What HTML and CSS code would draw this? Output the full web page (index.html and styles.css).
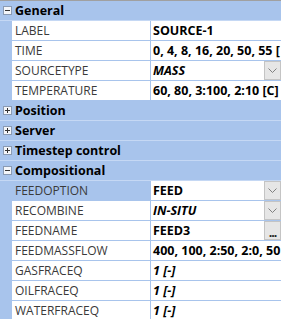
FILE: index.html
```html
<!DOCTYPE html>
<html>
<head>
  <meta charset="utf-8">
  <title>Properties</title>
  <link rel="stylesheet" href="styles.css">
</head>
<body>
  <div class="grid">
    <div class="cat">
      <svg class="tog" width="9" height="9" viewBox="0 0 9 9"><rect x="0.5" y="0.5" width="8" height="8" fill="#f4f6fa" stroke="#8b9bb3"/><path d="M2 4.5h5" stroke="#333"/></svg>
      General
    </div>
    <div class="prop"><div class="name">LABEL</div><div class="val"><span class="text">SOURCE-1</span></div></div>
    <div class="prop"><div class="name">TIME</div><div class="val"><span class="text">0, 4, 8, 16, 20, 50, 55 [</span></div></div>
    <div class="prop"><div class="name">SOURCETYPE</div><div class="val"><span class="text it">MASS</span><span class="btn drop"><svg width="9" height="5" viewBox="0 0 9 5"><path d="M0.5 0.5l4 4 4-4" fill="none" stroke="#808080"/></svg></span></div></div>
    <div class="prop"><div class="name">TEMPERATURE</div><div class="val"><span class="text">60, 80, 3:100, 2:10 [C]</span></div></div>

    <div class="cat">
      <svg class="tog" width="9" height="9" viewBox="0 0 9 9"><rect x="0.5" y="0.5" width="8" height="8" fill="#f4f6fa" stroke="#8b9bb3"/><path d="M2 4.5h5M4.5 2v5" stroke="#333"/></svg>
      Position
    </div>
    <div class="cat">
      <svg class="tog" width="9" height="9" viewBox="0 0 9 9"><rect x="0.5" y="0.5" width="8" height="8" fill="#f4f6fa" stroke="#8b9bb3"/><path d="M2 4.5h5M4.5 2v5" stroke="#333"/></svg>
      Server
    </div>
    <div class="cat">
      <svg class="tog" width="9" height="9" viewBox="0 0 9 9"><rect x="0.5" y="0.5" width="8" height="8" fill="#f4f6fa" stroke="#8b9bb3"/><path d="M2 4.5h5M4.5 2v5" stroke="#333"/></svg>
      Timestep control
    </div>
    <div class="cat">
      <svg class="tog" width="9" height="9" viewBox="0 0 9 9"><rect x="0.5" y="0.5" width="8" height="8" fill="#f4f6fa" stroke="#8b9bb3"/><path d="M2 4.5h5" stroke="#333"/></svg>
      Compositional
    </div>
    <div class="prop selected"><div class="name">FEEDOPTION</div><div class="val"><span class="text">FEED</span><span class="btn drop"><svg width="9" height="5" viewBox="0 0 9 5"><path d="M0.5 0.5l4 4 4-4" fill="none" stroke="#808080"/></svg></span></div></div>
    <div class="prop"><div class="name">RECOMBINE</div><div class="val"><span class="text it">IN-SITU</span><span class="btn drop"><svg width="9" height="5" viewBox="0 0 9 5"><path d="M0.5 0.5l4 4 4-4" fill="none" stroke="#808080"/></svg></span></div></div>
    <div class="prop"><div class="name">FEEDNAME</div><div class="val"><span class="text">FEED3</span><span class="btn dots">...</span></div></div>
    <div class="prop"><div class="name">FEEDMASSFLOW</div><div class="val"><span class="text">400, 100, 2:50, 2:0, 50</span></div></div>
    <div class="prop"><div class="name">GASFRACEQ</div><div class="val"><span class="text it">1 [-]</span></div></div>
    <div class="prop"><div class="name">OILFRACEQ</div><div class="val"><span class="text it">1 [-]</span></div></div>
    <div class="prop"><div class="name">WATERFRACEQ</div><div class="val"><span class="text it">1 [-]</span></div></div>
  </div>
</body>
</html>
```
FILE: styles.css
```css
body {
  margin: 0;
  font-family: "Open Sans", "Noto Sans", sans-serif;
  font-size: 12px;
  overflow: hidden;
}

.grid {
  width: 281px;
  border-top: 1px solid #a0a0a0;
  background: #a8c4ec;
  display: flex;
  flex-direction: column;
  gap: 1px;
}

.cat {
  height: 19px;
  display: flex;
  align-items: center;
  font-size: 12.5px;
  font-weight: bold;
  color: #000;
  box-shadow: 0 1px 0 #c5d8f4;
}
.cat .tog { margin: 0 3px; flex: none; }

.prop {
  height: 19px;
  display: flex;
  gap: 1px;
  padding-left: 12px;
}

.name {
  width: 135px;
  flex: none;
  padding-left: 3px;
  background: #fff;
  color: #3a3a3a;
  line-height: 19px;
  white-space: nowrap;
  overflow: hidden;
}
.selected .name { background: transparent; }

.val {
  flex: 1;
  min-width: 0;
  display: flex;
  background: #fff;
  font-size: 12.5px;
  font-weight: bold;
  color: #000;
  line-height: 19px;
}
.val .text {
  flex: 1;
  padding-left: 2px;
  white-space: nowrap;
  overflow: hidden;
}
.val .it { font-style: italic; }

.btn {
  flex: none;
  width: 15px;
  height: 17px;
  border: 1px solid #c4c4c4;
  background: #e6e6e6;
  display: flex;
  align-items: center;
  justify-content: center;
}
.btn.dots {
  align-items: flex-end;
  line-height: 12px;
  color: #222;
  letter-spacing: -1px;
}
```
